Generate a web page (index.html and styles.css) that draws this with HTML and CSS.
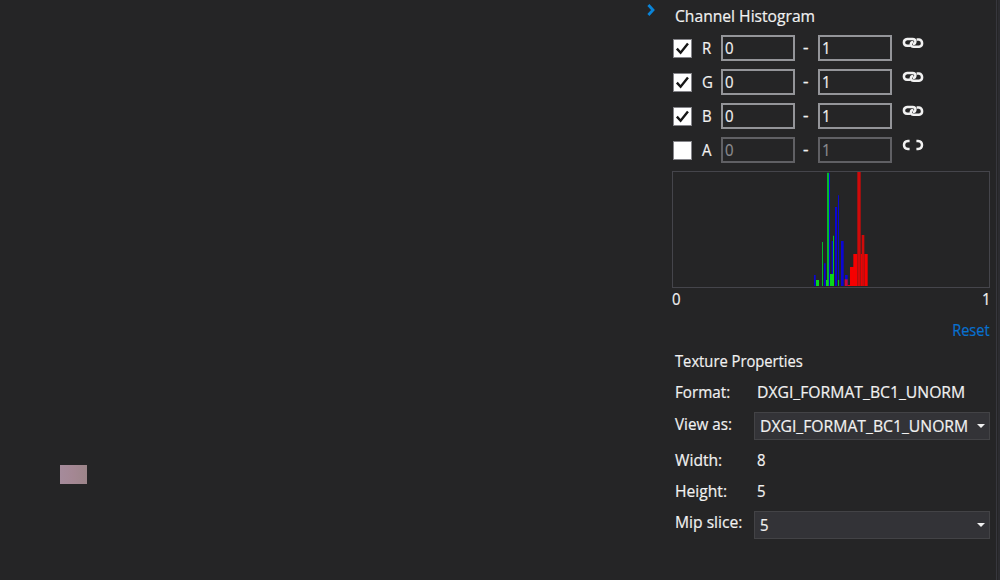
FILE: index.html
```html
<!DOCTYPE html>
<html lang="en">
<head>
<meta charset="utf-8">
<title>Texture viewer</title>
<link rel="stylesheet" href="styles.css">
</head>
<body>
<svg class="defs" width="0" height="0">
  <defs>
    <symbol id="linked" viewBox="0 0 22 12">
      <path d="M8.4 8.8H5.2Q1.9 8.4 1.9 5.4T5.2 2H10.6Q13.6 2.2 13.4 4.6T10.8 7" />
      <path d="M14.6 2.4H17Q20.1 3 20.1 6.2T17 9.8H11.8Q8.8 9.6 8.8 7.4T11.4 5" />
    </symbol>
    <symbol id="unlinked" viewBox="0 0 22 12">
      <path d="M7.6 2H6Q2 2.4 2 6T6 10H7.6" />
      <path d="M14.4 2H16Q20 2.4 20 6T16 10H14.4" />
    </symbol>
    <symbol id="check" viewBox="0 0 19 19">
      <path d="M3.2 9.6L7.4 14.2L15.6 4" />
    </symbol>
  </defs>
</svg>
<div class="app">
  <main class="canvas"><div class="texture"></div></main>
  <div class="toggle"><svg width="10" height="14" viewBox="0 0 10 14"><path d="M1.4 2L6 7L1.4 12" /></svg></div>
  <aside class="panel">
    <h2 class="heading"><span class="t t-channel">Channel Histogram</span></h2>
    <div class="channels">
      <div class="channel"><span class="box"><svg><use href="#check"/></svg></span><span class="name"><span class="t">R</span></span><span class="input"><span class="t">0</span></span><span class="dash">-</span><span class="input"><span class="t">1</span></span><svg class="link"><use href="#linked"/></svg></div>
      <div class="channel"><span class="box"><svg><use href="#check"/></svg></span><span class="name"><span class="t">G</span></span><span class="input"><span class="t">0</span></span><span class="dash">-</span><span class="input"><span class="t">1</span></span><svg class="link"><use href="#linked"/></svg></div>
      <div class="channel"><span class="box"><svg><use href="#check"/></svg></span><span class="name"><span class="t">B</span></span><span class="input"><span class="t">0</span></span><span class="dash">-</span><span class="input"><span class="t">1</span></span><svg class="link"><use href="#linked"/></svg></div>
      <div class="channel"><span class="box"></span><span class="name"><span class="t">A</span></span><span class="input off"><span class="t">0</span></span><span class="dash">-</span><span class="input off"><span class="t">1</span></span><svg class="link"><use href="#unlinked"/></svg></div>
    </div>
    <div class="histogram">
      <svg width="316" height="115" viewBox="-381 21 948 345">
        <g fill="#0b06d2">
          <path d="M42 330h5v33h-5zM72 295h5v68h-5zM87 25h3v338h-3zM95 228h4v135h-4zM105 126h6v237h-6zM114 91h3v272h-3zM123 228h8v135h-8zM135 330h8v33h-8z"/>
        </g>
        <g fill="#05b82c">
          <path d="M66 231h3v132h-3zM81 23h6v340h-6zM99 212h3v151h-3zM114 345h3v18h-3z"/>
          <path fill="#0ad61c" d="M48 345h9v18h-9zM78 345h6v18h-6zM90 327h12v36h-12z"/>
        </g>
        <path fill="#c8083c" d="M134 343h9v20h-9z"/>
        <path fill="#f60000" d="M143 360h7v3h-7zM150 306h10v57h-10zM160 267h12v96h-12zM182 267h4v96h-4zM193 267h10v96h-10z"/>
        <path fill="#d00a0a" d="M172 21h10v342h-10zM185 210h8v153h-8z"/>
      </svg>
    </div>
    <div class="scale"><span class="t">0</span><span class="t t-one">1</span></div>
    <div class="reset"><span class="t t-right">Reset</span></div>
    <h2 class="heading"><span class="t t-texture">Texture Properties</span></h2>
    <div class="prop format"><span class="label"><span class="t t-format">Format:</span></span><span class="value"><span class="t t-dxgi">DXGI_FORMAT_BC1_UNORM</span></span></div>
    <div class="prop view"><span class="label"><span class="t t-format">View as:</span></span><span class="select"><span class="t t-dxgi">DXGI_FORMAT_BC1_UNORM</span><i class="arrow"></i></span></div>
    <div class="prop width"><span class="label"><span class="t t-channel">Width:</span></span><span class="value"><span class="t">8</span></span></div>
    <div class="prop"><span class="label"><span class="t t-channel">Height:</span></span><span class="value"><span class="t">5</span></span></div>
    <div class="prop mip"><span class="label"><span class="t t-channel">Mip slice:</span></span><span class="select"><span class="t">5</span><i class="arrow"></i></span></div>
  </aside>
  <div class="edge"></div>
</div>
</body>
</html>
```
FILE: styles.css
```css
* { box-sizing: border-box; }
body { margin: 0; background: #252526; color: #f1f1f1; font: 17px/24px "Open Sans", "Noto Sans", sans-serif; overflow: hidden; }
.defs { display: none; }
.app { display: flex; width: 1000px; height: 580px; }
.canvas { width: 640px; padding: 465px 0 0 60px; }
.texture { width: 27px; height: 19px; background: linear-gradient(90deg, #a58b9b, #a48793 50%, #9c8589); }
.toggle { width: 32px; padding: 3px 0 0 7px; }
.toggle svg { display: block; fill: none; stroke: #0a84d8; stroke-width: 2.8; }
.panel { width: 324px; padding-top: 4px; }
.edge { width: 4px; border-right: 2px solid #2c2c30; border-left: 1px solid #37373d; }
.t { display: inline-block; white-space: pre; transform: scaleX(.88); transform-origin: 0 50%; -webkit-text-stroke: .2px; }
.t-channel { transform: scaleX(.92); }
.t-dxgi { transform: scaleX(.925); }
.t-texture { transform: scaleX(.867); }
.t-format { transform: scaleX(.895); }
.heading { margin: 0; padding-left: 3px; height: 24px; font: inherit; }
.channels { display: grid; grid-auto-rows: 34px; padding-top: 3px; }
.channel { display: flex; align-items: center; height: 34px; padding-left: 1px; }
.box { width: 19px; height: 19px; background: #fff; border: 1px solid #85858a; }
.box svg { display: block; width: 17px; height: 17px; fill: none; stroke: #161616; stroke-width: 2.7; }
.name { width: 29px; padding-left: 10px; }
.input { display: flex; align-items: center; width: 74px; height: 26px; padding: 0 0 1px 2px; border: 2px solid #949599; }
.off { border-color: #606064; color: #8b8b8f; }
.dash { width: 23px; padding: 0 0 2px 8px; -webkit-text-stroke: .3px; }
.link { width: 22px; height: 12px; margin: 0 0 10px 10px; fill: none; stroke: #f1f1f1; stroke-width: 2.5; }
.histogram { width: 318px; height: 117px; border: 1px solid #45454b; margin-top: 4px; }
.histogram svg { display: block; }
.scale { display: flex; justify-content: space-between; width: 318px; height: 24px; margin-top: -1px; }
.t-one { margin-right: -2px; }
.reset { width: 318px; height: 24px; margin: 7px 0; text-align: right; color: #0871d0; }
.t-right { transform: scaleX(.86); transform-origin: 100% 50%; }
.prop { display: flex; height: 24px; margin-top: 7px; }
.label { width: 79px; padding-left: 3px; }
.value { padding-left: 6px; }
.select { display: flex; align-items: center; justify-content: space-between; width: 236px; height: 28px; margin: 0 0 0 3px; padding: 0 5px 1px; background: #333337; border: 1px solid #434346; }
.select .t { width: 0; }
.view { margin-top: 8px; }
.width { margin-top: 12px; }
.mip .select { margin-top: 1px; }
.arrow { margin-right: -1px; border: 4px solid transparent; border-top: 4px solid #f1f1f1; border-bottom: 0; }
```
